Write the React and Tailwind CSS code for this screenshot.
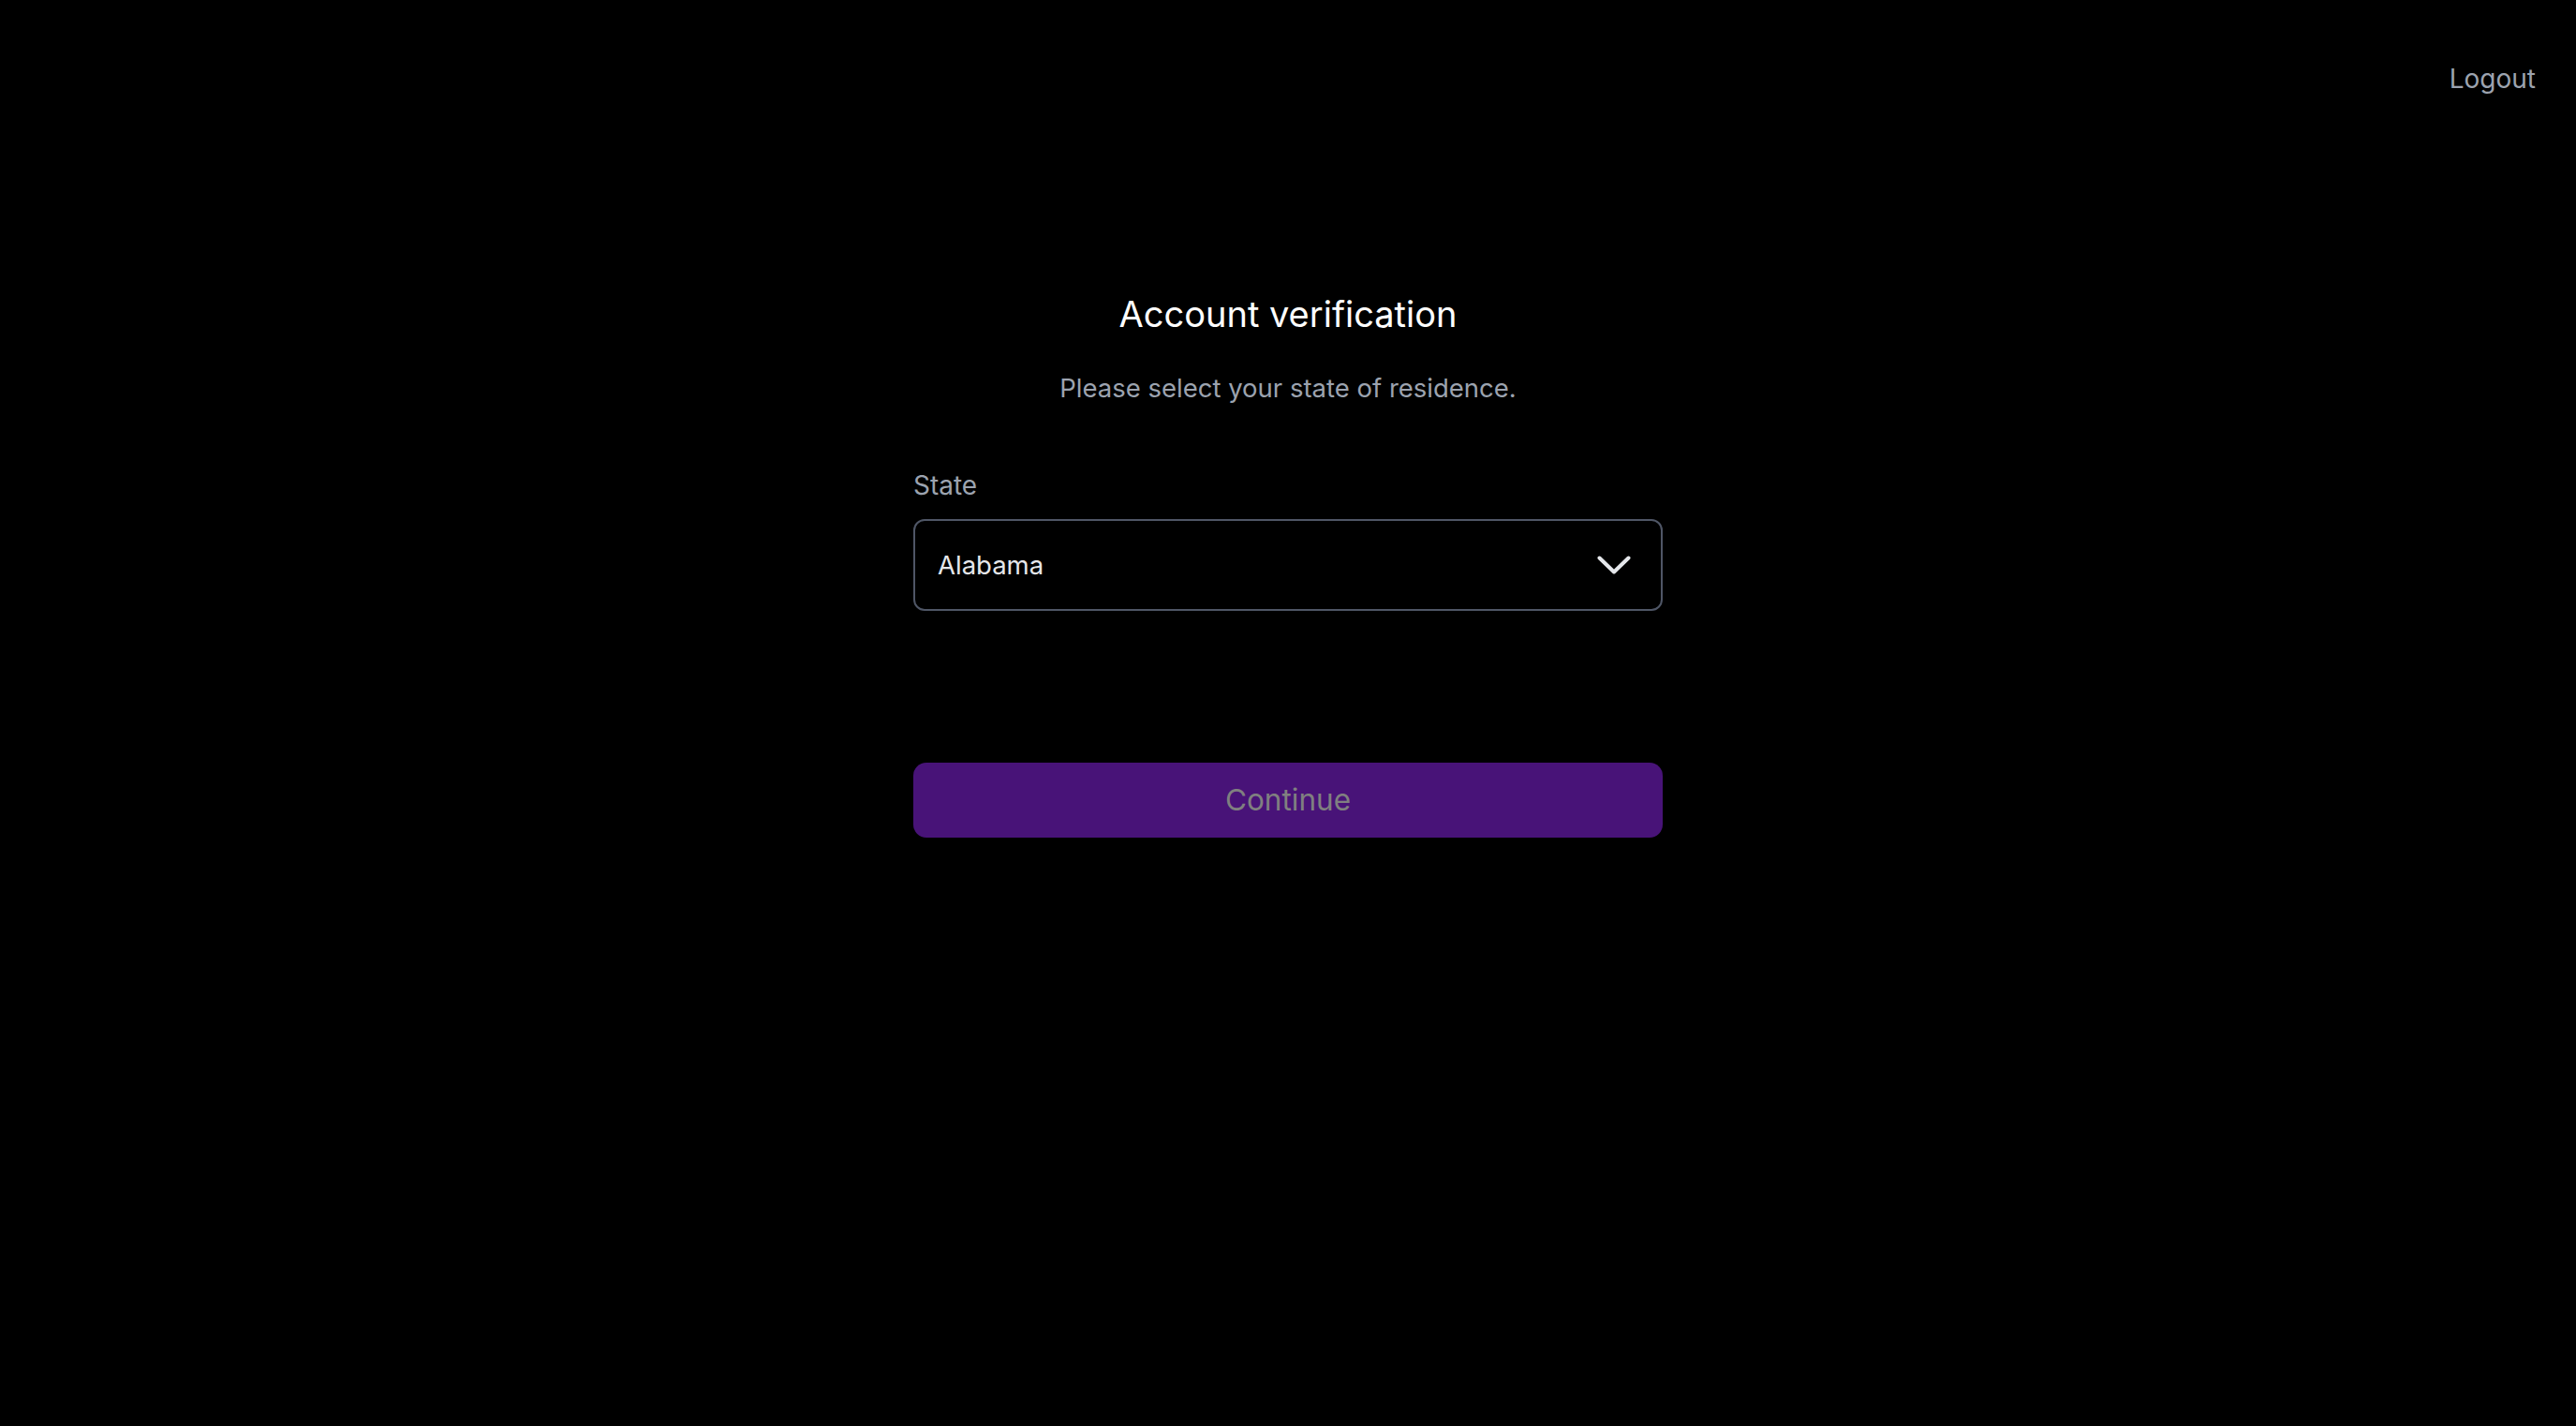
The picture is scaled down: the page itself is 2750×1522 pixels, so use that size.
import React, { useState } from 'react';

const STATES = ['Alabama', 'Alaska', 'Arizona', 'Arkansas', 'California', 'Colorado'];

const ChevronDown = () => (
  <svg width="36" height="20" viewBox="0 0 36 20" fill="none" className="shrink-0">
    <polyline
      points="2.5,2.5 18,17.5 33.5,2.5"
      stroke="#e5e7eb"
      strokeWidth="4"
      strokeLinecap="round"
      strokeLinejoin="round"
    />
  </svg>
);

const App = () => {
  const [state] = useState(STATES[0]);

  return (
    <div className="min-h-screen w-full bg-black font-['Inter',sans-serif] antialiased">
      {/* Top bar */}
      <div className="flex justify-end pt-[64px] pr-[43px]">
        <button className="text-[28px] leading-[40px] text-[#9ca3af]">Logout</button>
      </div>

      {/* Verification form */}
      <div className="mx-auto mt-[207px] flex w-[800px] flex-col">
        <h1 className="text-center text-[38px] leading-[48px] font-normal text-white">
          Account verification
        </h1>
        <p className="mt-[35px] text-center text-[27.5px] leading-[40px] text-[#9ca3af]">
          Please select your state of residence.
        </p>

        <label className="mt-[64px] text-[28px] leading-[40px] text-[#9ca3af]">State</label>
        <div className="mt-[16px] flex h-[98px] items-center justify-between rounded-[12px] border-2 border-[#4f5666] pl-[24px] pr-[32px]">
          <span className="text-[27.5px] leading-[40px] text-[#e5e7eb]">{state}</span>
          <ChevronDown />
        </div>

        <button
          disabled
          className="mt-[162px] h-[80px] w-full rounded-[14px] bg-[#481378] text-[31.5px] leading-[40px] text-[#808080]"
        >
          Continue
        </button>
      </div>
    </div>
  );
};

export default App;
